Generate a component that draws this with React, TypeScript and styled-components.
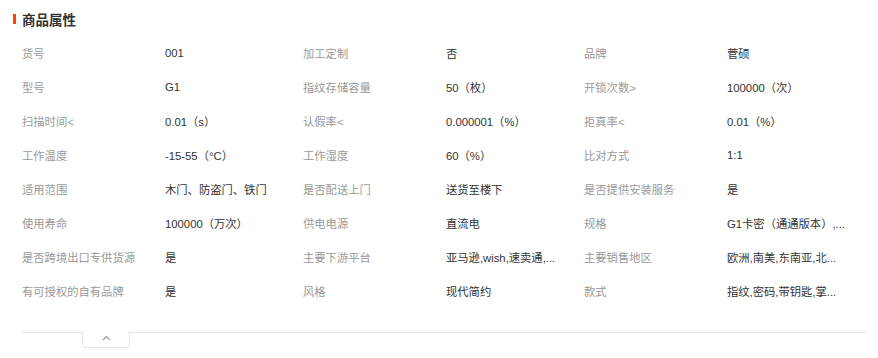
import React from "react";
import styled, { createGlobalStyle } from "styled-components";

const GlobalStyle = createGlobalStyle`
  body {
    margin: 0;
    background: #fff;
    font-family: "Liberation Sans", "Noto Sans CJK SC", sans-serif;
  }
`;

interface Attr {
  label: string;
  value: string;
}

const attrs: Attr[] = [
  { label: "货号", value: "001" },
  { label: "加工定制", value: "否" },
  { label: "品牌", value: "菅硕" },
  { label: "型号", value: "G1" },
  { label: "指纹存储容量", value: "50（枚）" },
  { label: "开锁次数>", value: "100000（次）" },
  { label: "扫描时间<", value: "0.01（s）" },
  { label: "认假率<", value: "0.000001（%）" },
  { label: "拒真率<", value: "0.01（%）" },
  { label: "工作温度", value: "-15-55（°C）" },
  { label: "工作湿度", value: "60（%）" },
  { label: "比对方式", value: "1:1" },
  { label: "适用范围", value: "木门、防盗门、铁门" },
  { label: "是否配送上门", value: "送货至楼下" },
  { label: "是否提供安装服务", value: "是" },
  { label: "使用寿命", value: "100000（万次）" },
  { label: "供电电源", value: "直流电" },
  { label: "规格", value: "G1卡密（通通版本）,..." },
  { label: "是否跨境出口专供货源", value: "是" },
  { label: "主要下游平台", value: "亚马逊,wish,速卖通,..." },
  { label: "主要销售地区", value: "欧洲,南美,东南亚,北..." },
  { label: "有可授权的自有品牌", value: "是" },
  { label: "风格", value: "现代简约" },
  { label: "款式", value: "指纹,密码,带钥匙,掌..." },
];

const App: React.FC = () => {
  return (
    <>
      <GlobalStyle />
      <Panel>
        <Title>商品属性</Title>
        <AttrGrid>
          {attrs.map((a) => (
            <Cell key={a.label}>
              <Label>{a.label}</Label>
              <Value>{a.value}</Value>
            </Cell>
          ))}
        </AttrGrid>
        <Footer>
          <Line />
          <ToggleTab>
            <svg width="9" height="6" viewBox="0 0 9 6">
              <path d="M1 5 L4.5 1.5 L8 5" fill="none" stroke="#999" strokeWidth="1.2" />
            </svg>
          </ToggleTab>
          <Line $grow />
        </Footer>
      </Panel>
    </>
  );
};

export default App;

const Panel = styled.div`
  width: 878px;
  padding: 9px 12px 0 13px;
  box-sizing: border-box;
`;

const Title = styled.h2`
  display: flex;
  align-items: center;
  gap: 6px;
  margin: 0;
  height: 20px;
  font-size: 13.5px;
  font-weight: 700;
  color: #333;
  &::before {
    content: "";
    width: 3px;
    height: 10px;
    background: #ff4400;
  }
`;

const AttrGrid = styled.div`
  display: grid;
  grid-template-columns: repeat(3, 281px);
  grid-auto-rows: 34px;
  margin: 7px 0 0 9px;
`;

const Cell = styled.div`
  display: flex;
  align-items: center;
  font-size: 11.3px;
`;

const Label = styled.span`
  width: 143px;
  flex-shrink: 0;
  color: #999;
  white-space: nowrap;
`;

const Value = styled.span`
  color: #333;
  white-space: nowrap;
`;

const Footer = styled.div`
  display: flex;
  align-items: flex-start;
  margin: 24px 0 0 9px;
  width: 844px;
`;

const Line = styled.div<{ $grow?: boolean }>`
  height: 1px;
  background: #e6e6e6;
  width: ${(p) => (p.$grow ? "auto" : "60px")};
  flex: ${(p) => (p.$grow ? "1" : "none")};
`;

const ToggleTab = styled.div`
  width: 48px;
  height: 16px;
  border: 1px solid #e6e6e6;
  border-top: none;
  border-radius: 0 0 4px 4px;
  display: flex;
  justify-content: center;
  padding-top: 3px;
  box-sizing: border-box;
`;
